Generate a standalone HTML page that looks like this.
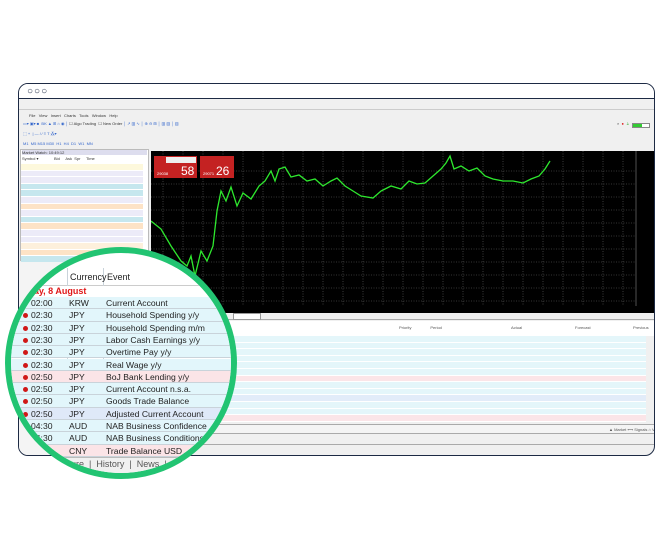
<!DOCTYPE html>
<html><head><meta charset="utf-8">
<style>
*{margin:0;padding:0;box-sizing:border-box}
body{width:672px;height:538px;background:#fff;position:relative;overflow:hidden;font-family:"Liberation Sans",sans-serif}
.a{position:absolute}
.win{left:18px;top:83px;width:637px;height:373px;border:1.5px solid #1d2a44;border-radius:10px;overflow:hidden;background:#f0f0f0}
.t{font-size:4px;color:#333;white-space:nowrap}
.mw div{height:6.6px;border-bottom:1px solid #fff}
.rows div{height:6.6px;border-bottom:1px solid #fff}
.circ{left:5px;top:247px;width:232px;height:232px;border-radius:50%;border:6px solid #22c472;overflow:hidden;background:#fff}
.in{position:absolute;left:-11px;top:-253px;width:260px;height:520px}
.r{position:absolute;left:0;width:260px;height:12.3px;border-bottom:1px solid #c9d3da;font-size:8.6px;color:#222;line-height:12px}
.r span{position:absolute}
.dot{position:absolute;left:23px;top:4px;width:5px;height:5px;border-radius:50%;background:#d01818}
</style></head><body>
<div class="a win">
  <div class="a" style="left:0;top:0;width:637px;height:15px;background:#fff;border-bottom:1px solid #1d2a44"></div>
  <div class="a" style="left:8px;top:2px;font-size:10px;letter-spacing:1px;color:#1d2a44;font-weight:bold">○○○</div>
  <div class="a t" style="left:10px;top:29px">File&nbsp;&nbsp;&nbsp;View&nbsp;&nbsp;&nbsp;Insert&nbsp;&nbsp;&nbsp;Charts&nbsp;&nbsp;&nbsp;Tools&nbsp;&nbsp;&nbsp;Window&nbsp;&nbsp;&nbsp;Help</div>
  <div class="a" style="left:0;top:25px;width:637px;height:1px;background:#ccc"></div>
  <div class="a t" style="left:4px;top:37px;color:#36c">▭▾ ▣▾ ■ &nbsp;BK ▲ ⊞ ⌂ ◉ │ <span style="color:#333">☐ Algo Trading &nbsp;☐ New Order</span> │ ↗ ▥ ∿ │ ⊕ ⊖ ⊞ │ ▥ ▥ │ ▥</div>
  <div class="a t" style="left:4px;top:47px;color:#36c">⬚ + &nbsp;| — / ⁄ ≡ T ⁂▾</div>
  <div class="a t" style="left:4px;top:57px;color:#36c">M1 &nbsp;M5 M15 M30 &nbsp;H1 &nbsp;H4 &nbsp;D1 &nbsp;W1 &nbsp;MN</div>
  <div class="a t" style="left:598px;top:37px;color:#555">⌕ &nbsp;<span style="color:#d22">●</span> &nbsp;<span style="color:#2a2">♙</span></div>
  <div class="a" style="left:613px;top:39px;width:18px;height:5px;border:1px solid #888;background:linear-gradient(90deg,#3c3 55%,#fff 55%)"></div>
  <div class="a" style="left:1px;top:65px;width:129px;height:112px;background:#fff;border:1px solid #bbb"></div>
  <div class="a t" style="left:3px;top:66px;background:#dde;width:125px">Market Watch: 10:49:12</div>
  <div class="a t" style="left:3px;top:72px">Symbol ▾ &nbsp;&nbsp;&nbsp;&nbsp;&nbsp;&nbsp;&nbsp;&nbsp;&nbsp;&nbsp;&nbsp;&nbsp;&nbsp;Bid &nbsp;&nbsp;&nbsp;&nbsp;Ask &nbsp;Spr &nbsp;&nbsp;&nbsp;&nbsp;Time</div>
  <div class="a mw" style="left:2px;top:80px;width:122px">
    <div style="background:#fdf8dc"></div><div style="background:#ecebf8"></div><div style="background:#ecebf8"></div><div style="background:#c6e7ee"></div><div style="background:#c6e7ee"></div><div style="background:#ecebf8"></div><div style="background:#fde3c6"></div><div style="background:#ecebf8"></div><div style="background:#c6e7ee"></div><div style="background:#fde3c6"></div><div style="background:#ecebf8"></div><div style="background:#ecebf8"></div><div style="background:#fdf0dc"></div><div style="background:#fde3c6"></div><div style="background:#c6e7ee"></div>
  </div>
  <div class="a" style="left:0;top:178px;width:130px;height:200px;background:#f4f4f4"></div>
  <svg class="a" style="left:132px;top:67px" width="505" height="162">
    <rect width="505" height="162" fill="#000"/>
    <g stroke="#666" stroke-width="0.6" stroke-dasharray="1,1.5">
      <path d="M0 20H485M0 33H485M0 46H485M0 59H485M0 72H485M0 85H485M0 98H485M0 111H485M0 124H485M0 137H485M0 150H485"/>
      <path d="M12 0V155M32 0V155M52 0V155M72 0V155M92 0V155M112 0V155M132 0V155M152 0V155M172 0V155M192 0V155M212 0V155M232 0V155M252 0V155M272 0V155M292 0V155M312 0V155M332 0V155M352 0V155M372 0V155M392 0V155M412 0V155M432 0V155M452 0V155M472 0V155"/>
    </g>
    <line x1="485" y1="0" x2="485" y2="155" stroke="#888" stroke-width="0.6"/>
    <polyline fill="none" stroke="#2ee82e" stroke-width="1.3" points="0,70 10,78 20,95 30,110 36,115 40,105 44,125 50,100 56,110 62,95 66,60 70,40 75,50 80,36 86,55 92,42 100,48 108,35 114,30 120,20 124,30 128,18 134,16 140,26 148,24 156,30 164,28 172,35 180,30 186,27 194,35 202,40 210,45 222,47 230,40 240,35 250,38 258,30 266,33 274,32 282,25 290,18 295,12 299,5 303,18 310,15 318,20 326,17 334,25 342,28 352,30 362,30 372,32 380,28 388,25 394,18 399,10"/>
    <rect x="3" y="5" width="43" height="22" fill="#c42222"/>
    <rect x="49" y="5" width="34" height="22" fill="#c42222"/>
    <rect x="15" y="6" width="30" height="6" fill="#eee"/>
    <text x="30" y="24" fill="#fff" font-size="12" font-family="Liberation Sans">58</text>
    <text x="65" y="24" fill="#fff" font-size="12" font-family="Liberation Sans">26</text>
    <text x="6" y="24" fill="#fff" font-size="4">29038</text>
    <text x="52" y="24" fill="#fff" font-size="4">29071</text>
  </svg>
  <div class="a" style="left:132px;top:229px;width:505px;height:7px;background:#f0f0f0;border-bottom:1px solid #aaa"></div>
  <div class="a" style="left:214px;top:229px;width:28px;height:7px;background:#fff;border:1px solid #999"></div>
  <div class="a" style="left:130px;top:237px;width:507px;height:15px;background:#fff"></div>
  <div class="a t" style="left:380px;top:241px;color:#555">Priority &nbsp;&nbsp;&nbsp;&nbsp;&nbsp;&nbsp;&nbsp;&nbsp;&nbsp;&nbsp;&nbsp;&nbsp;&nbsp;&nbsp;&nbsp;&nbsp;Period</div>
  <div class="a t" style="left:492px;top:241px;color:#555">Actual</div>
  <div class="a t" style="left:556px;top:241px;color:#555">Forecast</div>
  <div class="a t" style="left:614px;top:241px;color:#555">Previous</div>
  <div class="a rows" style="left:130px;top:252px;width:497px">
    <div style="background:#e4f6fa"></div><div style="background:#e4f6fa"></div><div style="background:#e4f6fa"></div><div style="background:#e4f6fa"></div><div style="background:#e4f6fa"></div><div style="background:#e4f6fa"></div><div style="background:#fbe5e8"></div><div style="background:#e4f6fa"></div><div style="background:#e4f6fa"></div><div style="background:#e2ecf9"></div><div style="background:#e4f6fa"></div><div style="background:#e4f6fa"></div><div style="background:#fbe5e8"></div>
  </div>
  <div class="a" style="left:130px;top:340px;width:507px;height:10px;background:#f4f4f4;border-top:1px solid #aaa;border-bottom:1px solid #aaa"></div>
  <div class="a t" style="left:590px;top:343px;color:#555">▲ Market ⟷ Signals ⌂ VPS</div>
  <div class="a" style="left:130px;top:360px;width:507px;height:1px;background:#aaa"></div>
</div>
<div class="a circ"><div class="in">
  <div class="a" style="left:0;top:268px;width:260px;height:18px;background:#fff;border-bottom:1px solid #ccc"></div>
  <div class="a" style="left:67px;top:268px;width:1px;height:177px;background:#c9d3da"></div>
  <div class="a" style="left:103px;top:268px;width:1px;height:177px;background:#c9d3da"></div>
  <div class="a" style="left:70px;top:272px;font-size:9px;color:#222">Currency</div>
  <div class="a" style="left:107px;top:272px;font-size:9px;color:#222">Event</div>
  <div class="a" style="left:0;top:286px;width:260px;height:11px;background:#fff"></div>
  <div class="a" style="left:8px;top:286px;font-size:9px;color:#e01818;font-weight:bold">Tuesday, 8 August</div>
  <div class="r" style="top:297px;background:#e2f6fb"><span style="left:31px">02:00</span><span style="left:69px">KRW</span><span style="left:106px">Current Account</span></div>
  <div class="r" style="top:309.3px;background:#e2f6fb"><i class="dot"></i><span style="left:31px">02:30</span><span style="left:69px">JPY</span><span style="left:106px">Household Spending y/y</span></div>
  <div class="r" style="top:321.6px;background:#e2f6fb"><i class="dot"></i><span style="left:31px">02:30</span><span style="left:69px">JPY</span><span style="left:106px">Household Spending m/m</span></div>
  <div class="r" style="top:333.9px;background:#e2f6fb"><i class="dot"></i><span style="left:31px">02:30</span><span style="left:69px">JPY</span><span style="left:106px">Labor Cash Earnings y/y</span></div>
  <div class="r" style="top:346.2px;background:#e2f6fb"><i class="dot"></i><span style="left:31px">02:30</span><span style="left:69px">JPY</span><span style="left:106px">Overtime Pay y/y</span></div>
  <div class="r" style="top:358.5px;background:#e2f6fb"><i class="dot"></i><span style="left:31px">02:30</span><span style="left:69px">JPY</span><span style="left:106px">Real Wage y/y</span></div>
  <div class="r" style="top:370.8px;background:#fbe4e7"><i class="dot"></i><span style="left:31px">02:50</span><span style="left:69px">JPY</span><span style="left:106px">BoJ Bank Lending y/y</span></div>
  <div class="r" style="top:383.1px;background:#e2f6fb"><i class="dot"></i><span style="left:31px">02:50</span><span style="left:69px">JPY</span><span style="left:106px">Current Account n.s.a.</span></div>
  <div class="r" style="top:395.4px;background:#e2f6fb"><i class="dot"></i><span style="left:31px">02:50</span><span style="left:69px">JPY</span><span style="left:106px">Goods Trade Balance</span></div>
  <div class="r" style="top:407.7px;background:#dfe9f8"><i class="dot"></i><span style="left:31px">02:50</span><span style="left:69px">JPY</span><span style="left:106px">Adjusted Current Account</span></div>
  <div class="r" style="top:420px;background:#e2f6fb"><span style="left:31px">04:30</span><span style="left:69px">AUD</span><span style="left:106px">NAB Business Confidence</span></div>
  <div class="r" style="top:432.3px;background:#e2f6fb"><span style="left:31px">04:30</span><span style="left:69px">AUD</span><span style="left:106px">NAB Business Conditions</span></div>
  <div class="r" style="top:444.6px;background:#fbe4e7"><span style="left:69px">CNY</span><span style="left:106px">Trade Balance USD</span></div>
  <div class="a" style="left:0;top:457px;width:260px;height:20px;background:#f0f0f0;border-top:1px solid #bbb"></div>
  <div class="a" style="left:46px;top:459px;font-size:9px;color:#555">Exposure &nbsp;|&nbsp; History &nbsp;|&nbsp; News &nbsp;|</div>
</div></div>
</body></html>
